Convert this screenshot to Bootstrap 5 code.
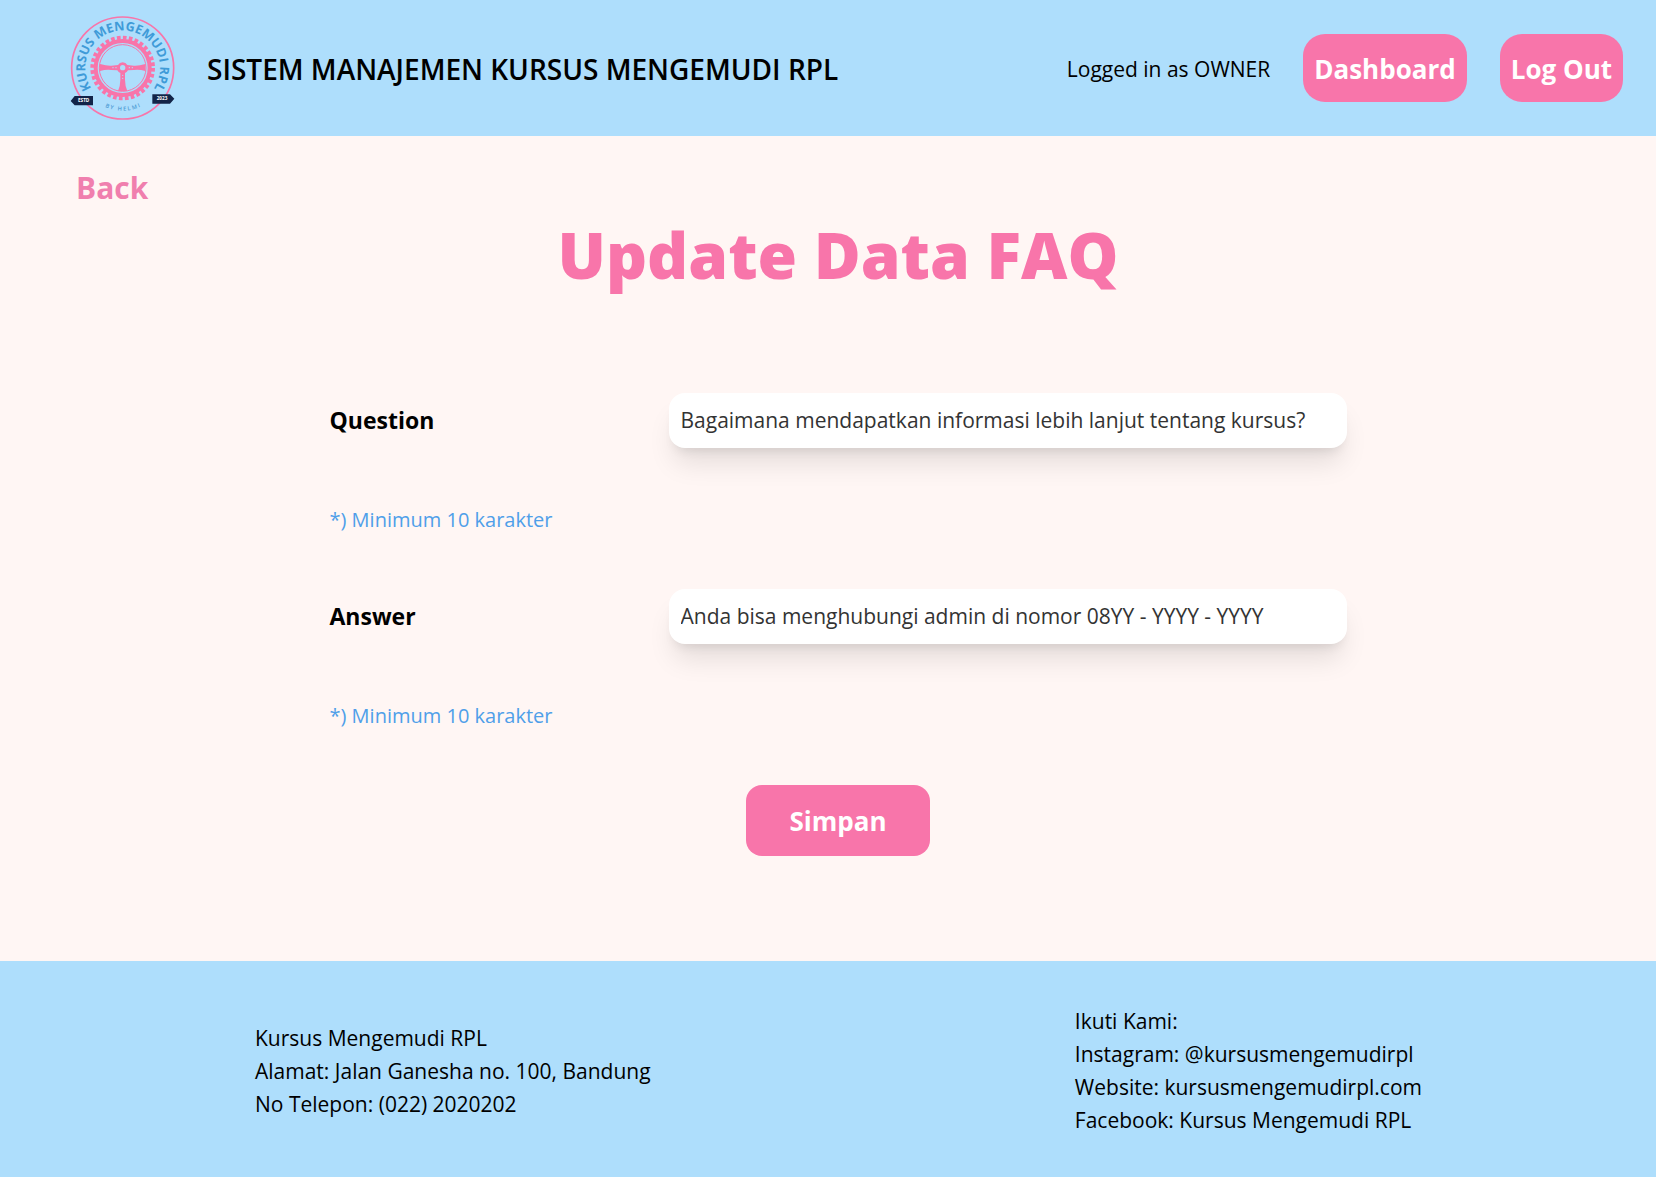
<!DOCTYPE html>
<html lang="id">
<head>
<meta charset="utf-8">
<meta name="viewport" content="width=device-width, initial-scale=1">
<title>Update Data FAQ</title>
<link href="https://cdn.jsdelivr.net/npm/bootstrap@5.3.0/dist/css/bootstrap.min.css" rel="stylesheet">
<style>
  :root { --pink: #f875aa; --sky: #aedefc; --cream: #fff6f4; --hint: #4f9fe9; }
  body { font-family: "Open Sans", "Noto Sans", sans-serif; font-size: 21px; line-height: 33px; color: #000; background: var(--cream); }
  .sky { background: var(--sky); }
  .site-header { min-height: 136px; padding: 8px 33px 8px 70px; column-gap: 32px; }
  .brand-name { font-size: 28px; font-weight: 600; padding-top: 2px; }
  .user-actions { gap: 33px; }
  .user-label { padding-top: 2px; }
  .pink-btn { --bs-btn-font-size: 26px; --bs-btn-font-weight: 700; --bs-btn-line-height: 36px; --bs-btn-border-width: 0;
    --bs-btn-color: #fff; --bs-btn-bg: var(--pink); --bs-btn-hover-color: #fff; --bs-btn-hover-bg: #e8649a; --bs-btn-active-bg: #e8649a; --bs-btn-active-color: #fff; }
  .nav-pill { --bs-btn-border-radius: 22px; padding: 17px 11px 15px; }
  .save-btn { --bs-btn-border-radius: 16px; padding: 18px 43px 17px; }
  main { padding: 32px 0 100px 20px; }
  .back-link { font-size: 30px; line-height: 40px; font-weight: 700; color: #f07fae; margin-left: 56px; }
  .page-title { font-size: 64px; line-height: 72px; font-weight: 800; color: var(--pink); margin: 11px 0 102px; }
  .faq-form { width: 92%; max-width: 1017px; }
  .field-name { font-size: 23px; font-weight: 700; }
  .field-box { border: 0; border-radius: 16px; padding: 11px 12px; font-size: 21px; line-height: 33px; color: #333;
    box-shadow: 0 20px 27px -5px rgba(0,0,0,.1), 0 8px 11px -6px rgba(0,0,0,.1); }
  .hint { font-size: 20px; color: var(--hint); margin: 55px 0 53px; }
  .site-footer { padding: 44px 234px 40px 255px; }
  @media (max-width: 1100px) { .site-footer { padding-left: 32px; padding-right: 32px; } }
</style>
<script src="https://cdn.jsdelivr.net/npm/bootstrap@5.3.0/dist/js/bootstrap.bundle.min.js"></script>
</head>
<body class="d-flex flex-column min-vh-100">
<header class="sky site-header d-flex flex-wrap align-items-center">
  <svg class="flex-shrink-0" width="105" height="105" viewBox="30 32 315 315" role="img" aria-label="Kursus Mengemudi RPL">
    <defs>
      <path id="arcTop" d="M109 267A112 112 0 1 1 267 267"/>
      <path id="arcBottom" d="M113 292A128 128 0 0 0 263 292"/>
    </defs>
    <circle cx="188" cy="188" r="153" fill="none" stroke="#f875aa" stroke-width="5"/>
    <circle cx="188" cy="188" r="91" fill="none" stroke="#f875aa" stroke-width="12" stroke-dasharray="11 6.867"/>
    <circle cx="188" cy="188" r="81" fill="none" stroke="#f875aa" stroke-width="12"/>
    <circle cx="188" cy="188" r="70" fill="none" stroke="#f875aa" stroke-width="3"/>
    <path fill="#f875aa" d="M120 176Q142 182 154 181L174 179A16 16 0 0 1 202 179L222 181Q236 182 256 176V197Q238 192 222 194L204 195Q199 203 195 203V223Q195 241 202 257H174Q181 241 181 223V203Q177 203 172 195L154 194Q138 192 120 197Z"/>
    <g fill="#aedefc"><circle cx="188" cy="187" r="8"/><circle cx="159" cy="187" r="2"/><circle cx="168" cy="187" r="2"/><circle cx="208" cy="187" r="2"/><circle cx="217" cy="187" r="2"/><circle cx="188" cy="210" r="2"/><circle cx="188" cy="219" r="2"/></g>
    <path fill="#122448" d="M32 287L44 272H99V300H44ZM277 267H330L343 280L330 295H277Z"/>
    <g font-family="Open Sans, sans-serif" font-weight="700">
      <text font-size="38" fill="#3f9bd8"><textPath href="#arcTop" startOffset="50%" text-anchor="middle">KURSUS MENGEMUDI RPL</textPath></text>
      <text font-size="17" fill="#4d9bd4" font-weight="600"><textPath href="#arcBottom" startOffset="50%" text-anchor="middle">B Y &#160; H E L M I</textPath></text>
      <text x="71" y="291" font-size="14" fill="#fff" text-anchor="middle">ESTD</text>
      <text x="306" y="285" font-size="14" fill="#fff" text-anchor="middle">2023</text>
    </g>
  </svg>
  <span class="brand-name">SISTEM MANAJEMEN KURSUS MENGEMUDI RPL</span>
  <div class="user-actions d-flex flex-wrap align-items-center ms-auto">
    <span class="user-label">Logged in as OWNER</span>
    <button type="button" class="btn pink-btn nav-pill">Dashboard</button>
    <button type="button" class="btn pink-btn nav-pill">Log Out</button>
  </div>
</header>
<main class="flex-grow-1">
  <a href="#" class="back-link d-inline-block text-decoration-none">Back</a>
  <h1 class="page-title text-center">Update Data FAQ</h1>
  <form class="faq-form mx-auto">
    <div class="row gx-0 align-items-center">
      <div class="col-4"><label for="question" class="field-name">Question</label></div>
      <div class="col-8"><input id="question" type="text" class="form-control field-box" value="Bagaimana mendapatkan informasi lebih lanjut tentang kursus?"></div>
    </div>
    <p class="hint">*) Minimum 10 karakter</p>
    <div class="row gx-0 align-items-center">
      <div class="col-4"><label for="answer" class="field-name">Answer</label></div>
      <div class="col-8"><input id="answer" type="text" class="form-control field-box" value="Anda bisa menghubungi admin di nomor 08YY - YYYY - YYYY"></div>
    </div>
    <p class="hint">*) Minimum 10 karakter</p>
    <div class="text-center"><button type="button" class="btn pink-btn save-btn">Simpan</button></div>
  </form>
</main>
<footer class="sky site-footer d-flex flex-wrap justify-content-between align-items-center">
  <div>
    <div>Kursus Mengemudi RPL</div>
    <div>Alamat: Jalan Ganesha no. 100, Bandung</div>
    <div>No Telepon: (022) 2020202</div>
  </div>
  <div>
    <div>Ikuti Kami:</div>
    <div>Instagram: @kursusmengemudirpl</div>
    <div>Website: kursusmengemudirpl.com</div>
    <div>Facebook: Kursus Mengemudi RPL</div>
  </div>
</footer>
</body>
</html>
